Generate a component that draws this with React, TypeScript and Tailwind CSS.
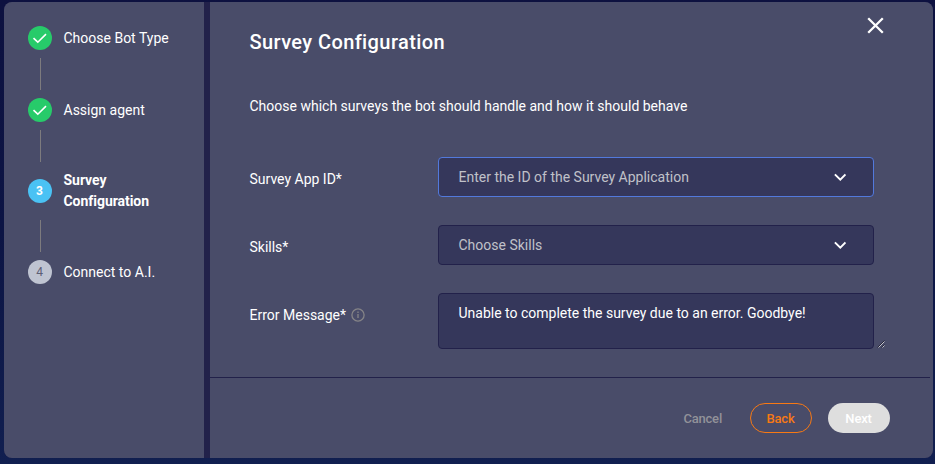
function Connector() {
  return <div className="ml-9 h-8 w-px shrink-0 bg-[#7d7b7e]" />;
}

function Done() {
  return (
    <span className="flex size-6 shrink-0 items-center justify-center rounded-full bg-[#27cb6a]">
      <svg width="24" height="24" viewBox="0 0 24 24" fill="none" stroke="#fff" strokeWidth="1.6">
        <path d="M5.5 12.1 9.8 16.2 18 8.1" />
      </svg>
    </span>
  );
}

function Sidebar() {
  return (
    <aside className="flex w-[200px] shrink-0 flex-col bg-[#494c69] pt-6 text-[14px] leading-[21px]">
      <div className="flex h-6 items-center gap-[11.5px] pl-6">
        <Done />
        <span>Choose Bot Type</span>
      </div>
      <div className="py-2">
        <Connector />
      </div>
      <div className="flex h-6 items-center gap-[11.5px] pl-6">
        <Done />
        <span>Assign agent</span>
      </div>
      <div className="py-2">
        <Connector />
      </div>
      <div className="flex h-[42px] items-center gap-[11.5px] pl-6">
        <span className="flex size-6 shrink-0 items-center justify-center rounded-full bg-[#4ac2f4] pr-px text-[12px] font-bold">3</span>
        <span className="w-[100px] font-bold tracking-[-0.04px]">Survey Configuration</span>
      </div>
      <div className="pt-2 pb-2">
        <Connector />
      </div>
      <div className="flex h-6 items-center gap-[11.5px] pl-6">
        <span className="flex size-6 shrink-0 items-center justify-center rounded-full bg-[#bfc4d1] pr-px text-[12px] text-[#5c5e75]">4</span>
        <span>Connect to A.I.</span>
      </div>
    </aside>
  );
}

function Chevron() {
  return (
    <svg width="12" height="8" viewBox="0 0 12 8" fill="none" stroke="#fff" strokeWidth="2">
      <path d="M0.9 1.4 6.3 6.6l5.2-5.2" />
    </svg>
  );
}

function SelectField({ text, border }: { text: string; border: string }) {
  return (
    <div className={`flex h-10 w-[436px] items-center justify-between rounded-[4px] border bg-[#35375b] pr-[27px] pl-[19.5px] text-[#c0c1c9] ${border}`}>
      <span>{text}</span>
      <Chevron />
    </div>
  );
}

export default function App() {
  return (
    <div className="h-[464px] w-[935px] bg-linear-to-b from-[#0d1140] via-[#0c1444] to-[#111f50] pt-0.5 pl-1 font-[Roboto,sans-serif] text-white">
      <div className="flex h-[456px] w-[929px] overflow-hidden rounded-[8px] bg-[#22214a]">
        <Sidebar />
        <main className="ml-1.5 flex w-[723px] flex-col bg-[#494c69] text-[14px]">
          <header className="flex h-[81px] justify-between pr-[49px] pl-[39.5px]">
            <h1 className="pt-[26px] text-[20px] leading-7 font-medium tracking-[0.4px]">Survey Configuration</h1>
            <svg className="mt-[15px]" width="17" height="17" viewBox="0 0 17 17" fill="none" stroke="#fff" strokeWidth="2.3">
              <path d="M1.2 1.2l14.6 14.6M15.8 1.2 1.2 15.8" />
            </svg>
          </header>
          <p className="h-[74px] pt-[13px] pl-[39.5px] leading-5">Choose which surveys the bot should handle and how it should behave</p>
          <div className="flex flex-col gap-7 pl-[39.5px]">
            <div className="flex">
              <label className="w-[188.5px] pt-3 leading-5">Survey App ID*</label>
              <SelectField text="Enter the ID of the Survey Application" border="border-[#5279dc]" />
            </div>
            <div className="flex">
              <label className="w-[188.5px] pt-3 leading-5">Skills*</label>
              <SelectField text="Choose Skills" border="border-[#22214a]" />
            </div>
            <div className="flex">
              <label className="flex h-8 w-[188.5px] items-end gap-[5px] leading-5">
                Error Message*
                <svg className="mb-[3px]" width="14" height="14" viewBox="0 0 14 14" fill="none" stroke="#858487" strokeWidth="1.3">
                  <circle cx="7" cy="7" r="6.1" />
                  <path d="M7 6v4M7 3.6v1.3" />
                </svg>
              </label>
              <div className="h-14 w-[436px] rounded-[4px] border border-[#22214a] bg-[#35375b] pt-[9px] pl-[19.5px] leading-5">Unable to complete the survey due to an error. Goodbye!</div>
              <svg className="mt-[47px] ml-[3px]" width="8" height="8" viewBox="0 0 8 8" fill="none">
                <path d="M0.5 7.5 7.5 0.5M4.5 7.5 7.5 4.5" stroke="#25253a" />
                <path d="M1.5 7.5 7.5 1.5M5.5 7.5 7.5 5.5" stroke="#c4c5cb" />
              </svg>
            </div>
          </div>
          <footer className="mt-7 mr-[3px] flex h-[81px] items-start justify-end border-t border-[#22214a] pt-[25px] pr-10 text-[13px] font-medium tracking-[-0.2px]">
            <button className="mr-7 h-[30px] pt-px text-[#929299]">Cancel</button>
            <button className="mr-4 h-[30px] w-[62px] rounded-full border border-[#f77914] pt-px pr-px text-[#f77914]">Back</button>
            <button className="h-[30px] w-[62px] rounded-full bg-[#dedede] pt-px pr-px text-white">Next</button>
          </footer>
        </main>
      </div>
    </div>
  );
}
